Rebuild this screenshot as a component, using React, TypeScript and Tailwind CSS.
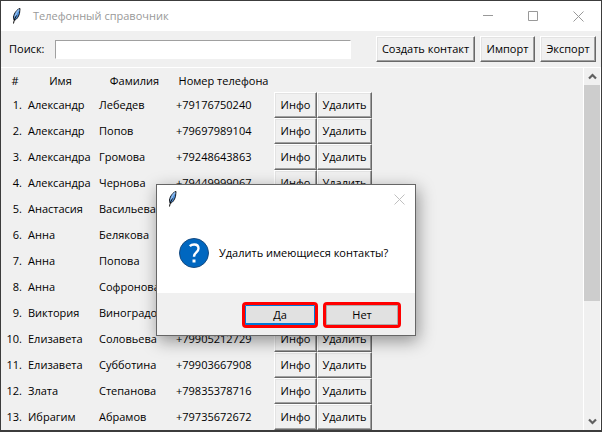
import type { ReactNode } from "react";

type Contact = { first: string; last: string; phone: string };

const contacts: Contact[] = [
  { first: "Александр", last: "Лебедев", phone: "+79176750240" },
  { first: "Александр", last: "Попов", phone: "+79697989104" },
  { first: "Александра", last: "Громова", phone: "+79248643863" },
  { first: "Александра", last: "Чернова", phone: "+79449999067" },
  { first: "Анастасия", last: "Васильева", phone: "+79125536480" },
  { first: "Анна", last: "Белякова", phone: "+79534417826" },
  { first: "Анна", last: "Попова", phone: "+79618240935" },
  { first: "Анна", last: "Софронова", phone: "+79370652218" },
  { first: "Виктория", last: "Виноградова", phone: "+79286104753" },
  { first: "Елизавета", last: "Соловьева", phone: "+79905212729" },
  { first: "Елизавета", last: "Субботина", phone: "+79903667908" },
  { first: "Злата", last: "Степанова", phone: "+79835378716" },
  { first: "Ибрагим", last: "Абрамов", phone: "+79735672672" },
];

function Feather() {
  return (
    <svg width="12" height="16" viewBox="0 0 12 16" aria-hidden="true">
      <path d="M9 .5C6.500 1 3 5 2.500 9L3 12C5 12.500 7.500 9 8.500 5.500Z" fill="#4b8bd4" stroke="#15181d" strokeWidth="1" />
      <path d="M8.200 1.500C6.500 3 4.500 6 4 9.500" fill="none" stroke="#8fbdf0" strokeWidth="1.400" />
      <path d="M5.500 7.500C4.500 9 3 12 2.500 15.500" fill="none" stroke="#0b0b0b" strokeWidth="1" />
    </svg>
  );
}

function Cross() {
  return (
    <svg width="11" height="11" viewBox="0 0 11 11" aria-hidden="true">
      <path d="M.5 .5L10.500 10.500M10.500 .5L.5 10.500" stroke="currentColor" fill="none" />
    </svg>
  );
}

function Chevron({ down = false }: { down?: boolean }) {
  return (
    <svg width="9" height="7" viewBox="0 0 9 7" aria-hidden="true" className={down ? "rotate-180" : ""}>
      <path d="M1 5.500L4.500 2L8 5.500" fill="none" stroke="#606060" strokeWidth="2.200" />
    </svg>
  );
}

function RaisedButton({ children }: { children: ReactNode }) {
  return (
    <button
      type="button"
      className="h-[26px] w-full border border-t-white border-r-[#696969] border-b-[#696969] border-l-white bg-[#f0f0f0] whitespace-nowrap shadow-[inset_-1px_-1px_0_#a0a0a0,inset_1px_1px_0_#e3e3e3]"
    >
      {children}
    </button>
  );
}

function TitleBar() {
  return (
    <header className="flex h-[30px] shrink-0 items-center bg-white pl-[10px] text-[#999999]">
      <Feather />
      <h1 className="ml-[10px] flex-1">Телефонный справочник</h1>
      <button type="button" aria-label="Свернуть" className="flex h-full w-[45px] items-center justify-center">
        <svg width="10" height="10" viewBox="0 0 10 10" aria-hidden="true">
          <path d="M0 4.500H10" stroke="currentColor" />
        </svg>
      </button>
      <button type="button" aria-label="Развернуть" className="flex h-full w-[45px] items-center justify-center">
        <svg width="10" height="10" viewBox="0 0 10 10" aria-hidden="true">
          <path d="M.5 .5H9.500V9.500H.5Z" fill="none" stroke="currentColor" />
        </svg>
      </button>
      <button type="button" aria-label="Закрыть" className="flex h-full w-[46px] items-center justify-center">
        <Cross />
      </button>
    </header>
  );
}

function ConfirmDialog() {
  return (
    <div
      role="dialog"
      aria-labelledby="confirm-text"
      className="absolute top-[183px] left-[155px] w-[260px] border border-[#666666] bg-white shadow-[2px_5px_16px_rgba(0,0,0,0.4)]"
    >
      <div className="flex h-[28px] items-center justify-between px-[10px] text-[#c0c0c0]">
        <Feather />
        <button type="button" aria-label="Закрыть диалог">
          <Cross />
        </button>
      </div>
      <div className="flex h-[80px] items-center gap-[10px] pl-[22px]">
        <svg width="30" height="30" viewBox="0 0 30 30" aria-hidden="true">
          <circle cx="15" cy="15" r="14.500" fill="#0067c0" stroke="#174b80" />
          <path d="M10.800 8.200C12 7 13.500 6.500 15.200 6.500C18 6.500 19.500 8.200 19.500 10.500C19.500 14.500 15 14.500 15 18.800" fill="none" stroke="#fff" strokeWidth="2.400" />
          <path d="M13.500 21.500h3v3h-3z" fill="#fff" />
        </svg>
        <p id="confirm-text" className="whitespace-nowrap">Удалить имеющиеся контакты?</p>
      </div>
      <div className="flex h-[42px] items-center justify-end gap-[5px] bg-[#f0f0f0] pt-[2px] pr-[14px]">
        <button
          type="button"
          className="h-[26px] w-[76px] rounded-[4px] border-3 border-[#ff0000] bg-[#e1e1e1] shadow-[inset_0_-2px_0_#0078d7,inset_0_0_0_1px_#0078d7]"
        >
          Да
        </button>
        <button
          type="button"
          className="h-[26px] w-[78px] rounded-[4px] border-3 border-[#ff0000] bg-[#e1e1e1] shadow-[inset_0_0_0_1px_#adadad]"
        >
          Нет
        </button>
      </div>
    </div>
  );
}

export default function App() {
  return (
    <div className="relative flex h-screen flex-col overflow-hidden border border-b-2 border-[#3c3c3c] bg-[#f0f0f0] font-['Open_Sans','Noto_Sans',sans-serif] text-[11px] leading-[16px] text-black">
      <TitleBar />
      <div className="flex h-[36px] shrink-0 items-center pr-[5px] pl-2">
        <label htmlFor="search" className="w-[46px]">
          Поиск:
        </label>
        <input
          id="search"
          type="text"
          className="h-[19px] min-w-0 flex-1 border border-t-[#a0a0a0] border-r-white border-b-white border-l-[#a0a0a0] bg-white px-1 outline-none"
        />
        <div className="ml-[25px] flex gap-[5px]">
          <div className="w-[99px]">
            <RaisedButton>Создать контакт</RaisedButton>
          </div>
          <div className="w-[55px]">
            <RaisedButton>Импорт</RaisedButton>
          </div>
          <div className="w-[56px]">
            <RaisedButton>Экспорт</RaisedButton>
          </div>
        </div>
      </div>
      <main className="flex min-h-0 flex-1 border-t border-white">
        <div className="min-w-0 flex-1 overflow-hidden pl-1">
          <table className="w-[367px] table-fixed border-collapse">
            <colgroup>
              <col className="w-[20px]" />
              <col className="w-[71px]" />
              <col className="w-[77px]" />
              <col className="w-[101px]" />
              <col className="w-[43px]" />
              <col className="w-[55px]" />
            </colgroup>
            <thead>
              <tr className="h-[24px]">
                <th className="p-0 pt-[2px] font-normal">#</th>
                <th className="p-0 pt-[2px] font-normal">Имя</th>
                <th className="p-0 pt-[2px] font-normal">Фамилия</th>
                <th className="p-0 pt-[2px] font-normal whitespace-nowrap">Номер телефона</th>
                <th className="p-0" colSpan={2} />
              </tr>
            </thead>
            <tbody>
              {contacts.map((c, i) => (
                <tr key={c.phone} className="h-[26px]">
                  <td className="p-0 pr-[3px] text-right">{i + 1}.</td>
                  <td className="p-0 pl-[3px]">{c.first}</td>
                  <td className="p-0 pl-[3px]">{c.last}</td>
                  <td className="p-0 pl-[3px]">{c.phone}</td>
                  <td className="p-0">
                    <RaisedButton>Инфо</RaisedButton>
                  </td>
                  <td className="p-0">
                    <RaisedButton>Удалить</RaisedButton>
                  </td>
                </tr>
              ))}
            </tbody>
          </table>
        </div>
        <div className="flex w-[18px] flex-col border-r border-l border-white">
          <button type="button" aria-label="Прокрутить вверх" className="flex h-[17px] items-center justify-center">
            <Chevron />
          </button>
          <div className="flex-1">
            <div className="h-[66%] bg-[#cdcdcd]" />
          </div>
          <button type="button" aria-label="Прокрутить вниз" className="flex h-[17px] items-center justify-center">
            <Chevron down />
          </button>
        </div>
      </main>
      <ConfirmDialog />
    </div>
  );
}
